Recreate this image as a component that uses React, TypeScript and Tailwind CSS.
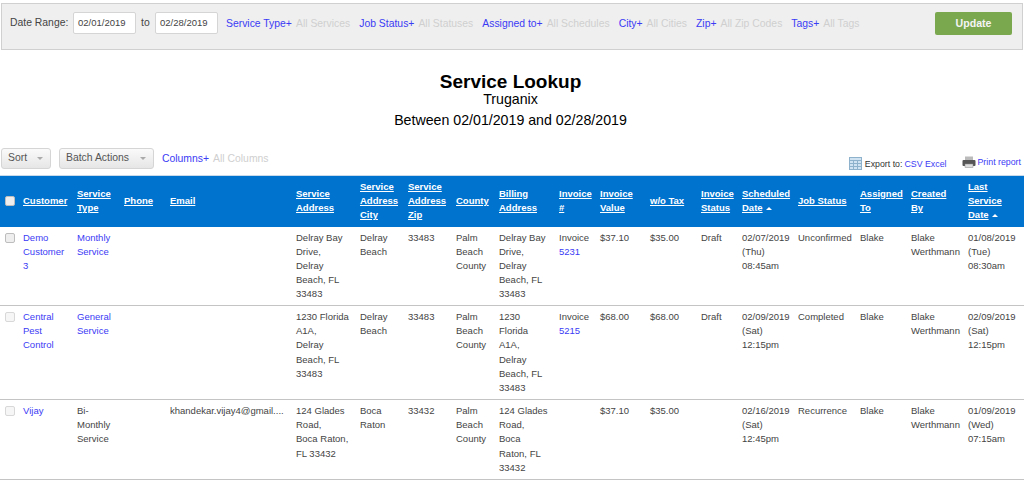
const widths = [23, 54, 47, 46, 126, 64, 48, 48, 43, 60, 41, 50, 51, 41, 56, 62, 51, 57, 56]

const headers: { label: string[]; sort?: boolean }[] = [
  { label: ["Customer"] },
  { label: ["Service", "Type"] },
  { label: ["Phone"] },
  { label: ["Email"] },
  { label: ["Service", "Address"] },
  { label: ["Service", "Address", "City"] },
  { label: ["Service", "Address", "Zip"] },
  { label: ["County"] },
  { label: ["Billing", "Address"] },
  { label: ["Invoice", "#"] },
  { label: ["Invoice", "Value"] },
  { label: ["w/o Tax"] },
  { label: ["Invoice", "Status"] },
  { label: ["Scheduled", "Date"], sort: true },
  { label: ["Job Status"] },
  { label: ["Assigned", "To"] },
  { label: ["Created", "By"] },
  { label: ["Last", "Service", "Date"], sort: true },
]

const rows = [
  {
    h: "h-[79px]",
    customer: ["Demo", "Customer", "3"],
    type: ["Monthly", "Service"],
    typeLink: true,
    email: "",
    address: ["Delray Bay", "Drive,", "Delray", "Beach, FL", "33483"],
    city: ["Delray", "Beach"],
    zip: "33483",
    billing: ["Delray Bay", "Drive,", "Delray", "Beach, FL", "33483"],
    invoice: "5231",
    value: "$37.10",
    tax: "$35.00",
    status: "Draft",
    sched: ["02/07/2019", "(Thu)", "08:45am"],
    job: "Unconfirmed",
    last: ["01/08/2019", "(Tue)", "08:30am"],
  },
  {
    h: "h-[94px]",
    customer: ["Central", "Pest", "Control"],
    type: ["General", "Service"],
    typeLink: true,
    email: "",
    address: ["1230 Florida", "A1A,", "Delray", "Beach, FL", "33483"],
    city: ["Delray", "Beach"],
    zip: "33483",
    billing: ["1230", "Florida", "A1A,", "Delray", "Beach, FL", "33483"],
    invoice: "5215",
    value: "$68.00",
    tax: "$68.00",
    status: "Draft",
    sched: ["02/09/2019", "(Sat)", "12:15pm"],
    job: "Completed",
    last: ["02/09/2019", "(Sat)", "12:15pm"],
  },
  {
    h: "h-[80px]",
    customer: ["Vijay"],
    type: ["Bi-", "Monthly", "Service"],
    typeLink: false,
    email: "khandekar.vijay4@gmail....",
    address: ["124 Glades", "Road,", "Boca Raton,", "FL 33432"],
    city: ["Boca", "Raton"],
    zip: "33432",
    billing: ["124 Glades", "Road,", "Boca", "Raton, FL", "33432"],
    invoice: "",
    value: "$37.10",
    tax: "$35.00",
    status: "",
    sched: ["02/16/2019", "(Sat)", "12:45pm"],
    job: "Recurrence",
    last: ["01/09/2019", "(Wed)", "07:15am"],
  },
]

function Lines({ items }: { items: string[] }) {
  return (
    <>
      {items.map((t, i) => (
        <div key={i}>{t}</div>
      ))}
    </>
  )
}

function Filter({ label, value }: { label: string; value: string }) {
  return (
    <div className="flex gap-[4px] whitespace-nowrap">
      <span className="text-[#3b3bf5]">{label}</span>
      <span className="text-[#cfcfcf]">{value}</span>
    </div>
  )
}

function Dropdown({ label, className }: { label: string; className: string }) {
  return (
    <div
      className={`flex h-[21px] items-center justify-between rounded-[3px] border border-[#d5d5d5] bg-gradient-to-b from-[#fafafa] to-[#e6e6e6] pl-[6px] pr-[7px] text-[10.4px] text-[#555] ${className}`}
    >
      <span>{label}</span>
      <span className="h-0 w-0 border-x-[3px] border-t-[3px] border-x-transparent border-t-[#aaa]" />
    </div>
  )
}

function Check({ faded }: { faded?: boolean }) {
  return (
    <div
      className={`h-[10px] w-[10px] rounded-[2px] border ${
        faded ? "border-[#d8d8d8] bg-[#f6f6f6]" : "border-[#bdbdbd] bg-[#eeeeee]"
      }`}
    />
  )
}

function Cell({ children }: { children?: React.ReactNode }) {
  return <td className="px-0 pb-0 pt-[4px] align-top">{children}</td>
}

export default function App() {
  return (
    <div className="h-[480px] w-[1024px] overflow-hidden bg-white font-['Liberation_Sans',Arial,sans-serif] text-[9.5px] leading-[14.2px] text-[#444]">
      <div className="px-[1px] pt-[3px]">
        <div className="flex h-[47px] w-[1022px] items-start border border-[#d0d0d0] bg-[#efefef] pl-[8px] pr-[10px] pt-[8px]">
          <div className="flex h-[22px] items-center">
            <span className="w-[63px] whitespace-nowrap text-[10.4px] text-[#444]">Date Range:</span>
            <div className="flex h-[22px] w-[63px] items-center rounded-[2px] border border-[#d5d5d5] bg-white pl-[4px]">
              02/01/2019
            </div>
            <span className="w-[19px] pl-[5px] text-[10.4px]">to</span>
            <div className="flex h-[22px] w-[63px] items-center rounded-[2px] border border-[#d5d5d5] bg-white pl-[4px]">
              02/28/2019
            </div>
          </div>
          <div className="ml-[8px] mt-[1px] flex h-[22px] items-center gap-[9px] text-[10.4px]">
            <Filter label="Service Type+" value="All Services" />
            <Filter label="Job Status+" value="All Statuses" />
            <Filter label="Assigned to+" value="All Schedules" />
            <Filter label="City+" value="All Cities" />
            <Filter label="Zip+" value="All Zip Codes" />
            <Filter label="Tags+" value="All Tags" />
          </div>
          <div className="ml-auto flex h-[23px] w-[77px] items-center justify-center rounded-[2px] bg-[#7aa84f] text-[10.6px] font-bold text-[#f4f4f4]">
            Update
          </div>
        </div>
      </div>

      <div className="mt-[22px] pr-[3px] text-center text-black">
        <div className="text-[19px] font-bold leading-[20px]">Service Lookup</div>
        <div className="-mt-[1px] text-[14.2px] leading-[16px]">Truganix</div>
        <div className="mt-[5px] text-[14.2px] leading-[16px]">Between 02/01/2019 and 02/28/2019</div>
      </div>

      <div className="mt-[20px] flex h-[27px] items-start pl-[1px]">
        <Dropdown label="Sort" className="w-[50px]" />
        <Dropdown label="Batch Actions" className="ml-[8px] w-[95px]" />
        <div className="ml-[8px] mt-[4px] text-[10.4px]">
          <Filter label="Columns+" value="All Columns" />
        </div>
        <div className="ml-auto flex items-center pr-[3px] pt-[7px] text-[8.8px]">
          <svg width="13" height="13" viewBox="0 0 13 13" className="mr-[3px]">
            <rect x="0.5" y="0.5" width="12" height="12" fill="#cfe3f2" stroke="#8fb2cc" />
            <path d="M0.5 3.5H12.5M0.5 6.5H12.5M0.5 9.5H12.5M4.5 3.5V12.5M8.5 3.5V12.5" stroke="#8fb2cc" strokeWidth="1" />
          </svg>
          <span className="text-[#333]">Export to:</span>
          <span className="ml-[2px] text-[#3b3bf5]">CSV Excel</span>
          <svg width="14" height="12" viewBox="0 0 14 12" className="mb-[3px] ml-[16px] mr-[1px]">
            <rect x="3" y="0.5" width="8" height="4" fill="#bbb" />
            <rect x="0.5" y="4" width="13" height="6" rx="1" fill="#555" />
            <rect x="3" y="8" width="8" height="3.5" fill="#ddd" stroke="#888" strokeWidth="0.5" />
          </svg>
          <span className="mb-[3px] text-[#3b3bf5]">Print report</span>
        </div>
      </div>

      <table className="w-[1024px] table-fixed border-collapse">
        <colgroup>
          {widths.map((w, i) => (
            <col key={i} style={{ width: w }} />
          ))}
        </colgroup>
        <thead>
          <tr className="h-[51px] border-t border-[#c9dbea] bg-[#0073cf] text-left text-white">
            <th className="pl-[5px] font-normal">
              <Check />
            </th>
            {headers.map((h) => (
              <th key={h.label.join(" ")} className="p-0 align-middle text-[9.5px] font-bold underline">
                {h.label.map((l, i) => (
                  <div key={l} className="whitespace-nowrap">
                    {l}
                    {h.sort && i === h.label.length - 1 && (
                      <span className="ml-[3px] inline-block h-0 w-0 border-x-[3px] border-b-[3px] border-x-transparent border-b-white align-middle no-underline" />
                    )}
                  </div>
                ))}
              </th>
            ))}
          </tr>
        </thead>
        <tbody className="whitespace-nowrap">
          {rows.map((r, idx) => (
            <tr key={idx} className={`${r.h} border-b border-[#c4c4c4]`}>
              <td className="pl-[5px] pt-[6px] align-top">
                <Check faded={idx > 0} />
              </td>
              <Cell>
                <div className="text-[#3b3bf5]">
                  <Lines items={r.customer} />
                </div>
              </Cell>
              <Cell>
                <div className={r.typeLink ? "text-[#3b3bf5]" : ""}>
                  <Lines items={r.type} />
                </div>
              </Cell>
              <Cell />
              <Cell>{r.email}</Cell>
              <Cell>
                <Lines items={r.address} />
              </Cell>
              <Cell>
                <Lines items={r.city} />
              </Cell>
              <Cell>{r.zip}</Cell>
              <Cell>
                <Lines items={["Palm", "Beach", "County"]} />
              </Cell>
              <Cell>
                <Lines items={r.billing} />
              </Cell>
              <Cell>
                {r.invoice && (
                  <>
                    <div>Invoice</div>
                    <div className="text-[#3b3bf5]">{r.invoice}</div>
                  </>
                )}
              </Cell>
              <Cell>{r.value}</Cell>
              <Cell>{r.tax}</Cell>
              <Cell>{r.status}</Cell>
              <Cell>
                <Lines items={r.sched} />
              </Cell>
              <Cell>{r.job}</Cell>
              <Cell>Blake</Cell>
              <Cell>
                <Lines items={["Blake", "Werthmann"]} />
              </Cell>
              <Cell>
                <Lines items={r.last} />
              </Cell>
            </tr>
          ))}
        </tbody>
      </table>
    </div>
  )
}
